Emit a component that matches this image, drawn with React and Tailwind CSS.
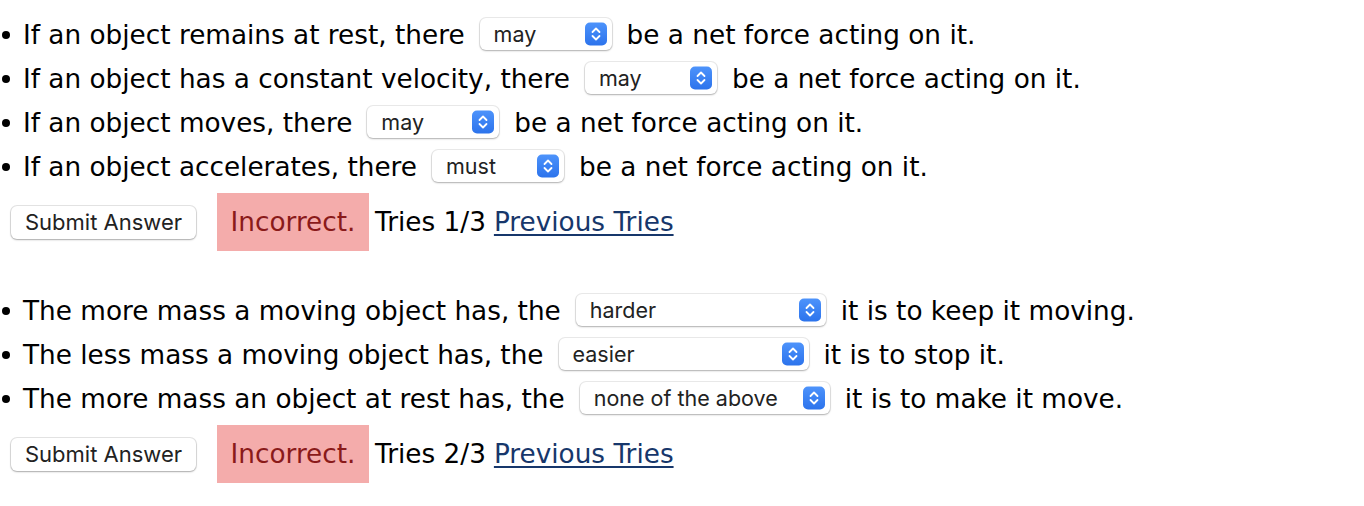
import { useState } from "react";

const body = { fontFamily: '"DejaVu Sans", Verdana, sans-serif' };
const ui = { fontFamily: 'Inter, "Liberation Sans", Arial, sans-serif' };

function Chevrons() {
  return (
    <span className="pointer-events-none absolute right-[5px] top-1/2 flex h-[23px] w-[22px] -translate-y-1/2 items-center justify-center rounded-[5px] bg-gradient-to-b from-[#4d93fb] to-[#2c73ec]">
      <svg width="10" height="15" viewBox="0 0 10 15" fill="none" stroke="white" strokeWidth="1.8" strokeLinecap="round" strokeLinejoin="round">
        <path d="M1.5 5.5 L5 2 L8.5 5.5" />
        <path d="M1.5 9.5 L5 13 L8.5 9.5" />
      </svg>
    </span>
  );
}

function Pick({ value, options, width }) {
  const [v, setV] = useState(value);
  return (
    <span className={`relative mx-[15px] block h-[32px] shrink-0 ${width}`}>
      <select
        value={v}
        onChange={(e) => setV(e.target.value)}
        className="block h-[32px] w-full appearance-none rounded-[6px] bg-white py-0 pl-[14px] pr-[32px] text-[21.5px] leading-[32px] text-[#222] shadow-[0_0_0_1px_rgba(0,0,0,0.08),0_1px_2px_rgba(0,0,0,0.25)] outline-none"
        style={ui}
      >
        {options.map((o) => (
          <option key={o}>{o}</option>
        ))}
      </select>
      <Chevrons />
    </span>
  );
}

function Row({ before, after, pick }) {
  return (
    <li className="flex h-[44px] items-center whitespace-nowrap">
      <span className="flex w-[23px] items-center pl-[2px] pt-[1px]">
        <span className="h-[8px] w-[8px] rounded-full bg-black" />
      </span>
      <span className="pt-[3px]">{before}</span>
      {pick}
      <span className="pt-[3px]">{after}</span>
    </li>
  );
}

function Status({ tries }) {
  return (
    <div className="flex h-[58px] items-center whitespace-nowrap">
      <button
        className="ml-[11px] h-[33px] w-[185px] rounded-[6px] bg-white text-[22px] text-[#222] shadow-[0_0_0_1px_rgba(0,0,0,0.1),0_1px_2px_rgba(0,0,0,0.25)]"
        style={ui}
      >
        Submit Answer
      </button>
      <span className="ml-[21px] flex h-full w-[152px] items-center justify-center bg-[#f4acab] pt-[2px] text-[#8a1a1a]">
        Incorrect.
      </span>
      <span className="ml-[6px] pt-[2px]">Tries {tries}</span>
      <a href="#" className="ml-[8px] pt-[2px] text-[#17376b] underline decoration-[2px] underline-offset-[3px]">
        Previous Tries
      </a>
    </div>
  );
}

const mayMust = ["may", "must", "must not"];
const hardEasy = ["harder", "easier", "none of the above"];

export default function App() {
  return (
    <div className="min-h-screen bg-white pt-[12px] text-[26.3px] text-black" style={body}>
      <ul>
        <Row before="If an object remains at rest, there" after="be a net force acting on it." pick={<Pick value="may" options={mayMust} width="w-[132px]" />} />
        <Row before="If an object has a constant velocity, there" after="be a net force acting on it." pick={<Pick value="may" options={mayMust} width="w-[132px]" />} />
        <Row before="If an object moves, there" after="be a net force acting on it." pick={<Pick value="may" options={mayMust} width="w-[132px]" />} />
        <Row before="If an object accelerates, there" after="be a net force acting on it." pick={<Pick value="must" options={mayMust} width="w-[132px]" />} />
      </ul>
      <div className="mt-[5px]">
        <Status tries="1/3" />
      </div>

      <ul className="mt-[37px]">
        <Row before="The more mass a moving object has, the" after="it is to keep it moving." pick={<Pick value="harder" options={hardEasy} width="w-[250px]" />} />
        <Row before="The less mass a moving object has, the" after="it is to stop it." pick={<Pick value="easier" options={hardEasy} width="w-[250px]" />} />
        <Row before="The more mass an object at rest has, the" after="it is to make it move." pick={<Pick value="none of the above" options={hardEasy} width="w-[250px]" />} />
      </ul>
      <div className="mt-[5px]">
        <Status tries="2/3" />
      </div>
    </div>
  );
}
